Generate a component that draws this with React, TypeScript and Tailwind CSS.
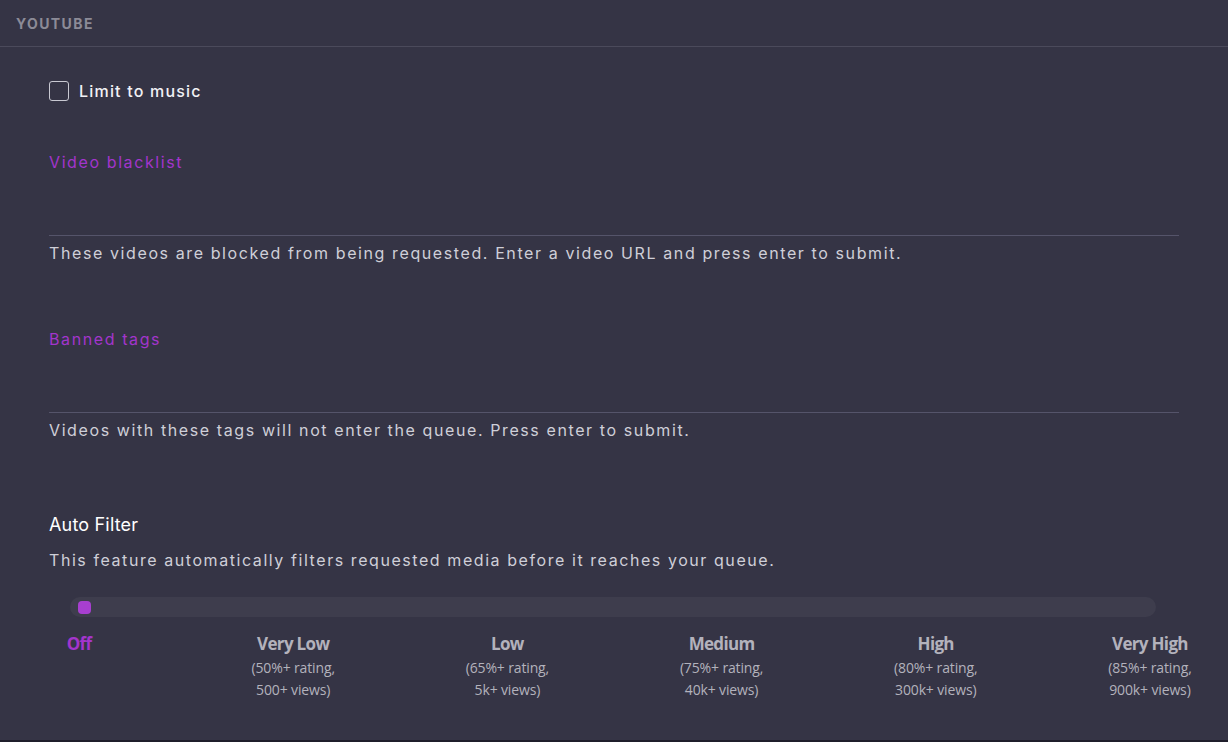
import { useState } from 'react';

const levels = [
  { name: 'Off', detail: null },
  { name: 'Very Low', detail: ['(50%+ rating,', '500+ views)'] },
  { name: 'Low', detail: ['(65%+ rating,', '5k+ views)'] },
  { name: 'Medium', detail: ['(75%+ rating,', '40k+ views)'] },
  { name: 'High', detail: ['(80%+ rating,', '300k+ views)'] },
  { name: 'Very High', detail: ['(85%+ rating,', '900k+ views)'] },
];

function TagField({ label, help }: { label: string; help: string }) {
  return (
    <div>
      <div className="text-[16px] leading-5 tracking-[0.1em] text-[#a335cc]">{label}</div>
      <input
        type="text"
        className="mt-[21px] block h-[43px] w-full border-b border-[#55546a] bg-transparent text-[15px] text-white outline-none"
      />
      <p className="mt-[7px] text-[16px] leading-5 tracking-[0.1em] text-[#cfcfd8]">{help}</p>
    </div>
  );
}

export default function App() {
  const [limitMusic, setLimitMusic] = useState(false);
  const [level] = useState(0);

  return (
    <div
      className="h-[742px] w-full overflow-hidden border-b-2 border-[#1f1e2b] bg-[#353445]"
      style={{ fontFamily: 'Inter, "Noto Sans", sans-serif' }}
    >
      <div className="flex h-[47px] items-center border-b border-[#4b4a5b] px-4">
        <span className="text-[14px] font-bold tracking-[0.1em] text-[#8c8b97]">YOUTUBE</span>
      </div>

      <div className="px-[49px]">
        <label className="mt-[34px] flex cursor-pointer items-center gap-[10px]">
          <input
            type="checkbox"
            checked={limitMusic}
            onChange={(e) => setLimitMusic(e.target.checked)}
            className="h-5 w-5 cursor-pointer appearance-none rounded-[3px] border border-[#c9c9d2] bg-transparent"
          />
          <span className="text-[16px] font-medium leading-5 tracking-[0.075em] text-[#f1f1f5]">Limit to music</span>
        </label>

        <div className="mt-[51px]">
          <TagField
            label="Video blacklist"
            help="These videos are blocked from being requested. Enter a video URL and press enter to submit."
          />
        </div>

        <div className="mt-[66px]">
          <TagField label="Banned tags" help="Videos with these tags will not enter the queue. Press enter to submit." />
        </div>

        <h2 className="mt-[73px] text-[18px] leading-6 tracking-[0.01em] text-white">Auto Filter</h2>
        <p className="mt-[13px] text-[16px] leading-5 tracking-[0.098em] text-[#cfcfd8]">
          This feature automatically filters requested media before it reaches your queue.
        </p>

        <div className="ml-[21px] mt-[27px] flex h-[20px] w-[1086px] items-center rounded-full bg-[#3e3d4d] px-2">
          <div className="h-[13px] w-[13px] rounded-[4px] bg-[#a73fd0]" />
        </div>

        <div
          className="-ml-[45px] mt-[17px] flex w-[1221px] justify-between"
          style={{ fontFamily: '"Open Sans", Lato, sans-serif' }}
        >
          {levels.map((lv, i) => (
            <div key={lv.name} className="w-[150px] text-center">
              <div
                className={
                  i === level
                    ? 'text-[17px] font-bold leading-5 tracking-[-0.04em] text-[#a335cc]'
                    : 'text-[17px] font-bold leading-5 tracking-[-0.04em] text-[#b3b2bc]'
                }
              >
                {lv.name}
              </div>
              {lv.detail && (
                <div className="mt-[3px] text-[14px] leading-[22px] tracking-[-0.01em] text-[#b3b2bc]">
                  <div>{lv.detail[0]}</div>
                  <div>{lv.detail[1]}</div>
                </div>
              )}
            </div>
          ))}
        </div>
      </div>
    </div>
  );
}
